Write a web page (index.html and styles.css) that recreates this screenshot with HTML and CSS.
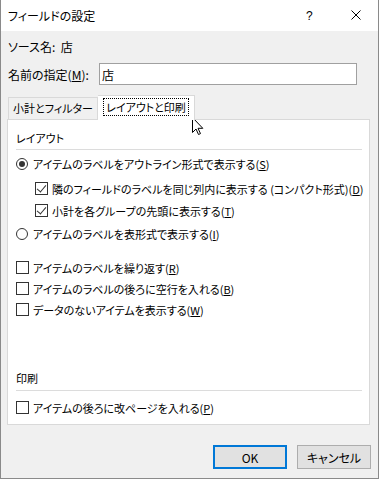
FILE: index.html
```html
<!DOCTYPE html>
<html lang="ja">
<head>
    <meta charset="UTF-8">
    <meta name="viewport" content="width=device-width, initial-scale=1.0">
    <title>フィールドの設定</title>
    <link rel="stylesheet" href="styles.css">
</head>
<body>
    <div class="window">
        <div class="titlebar">
            <span class="title">フィールドの設定</span>
            <span class="help">?</span>
            <span class="close">
                <svg width="10" height="10" viewBox="0 0 10 10"><path d="M0.5 0.5 L9.5 9.5 M9.5 0.5 L0.5 9.5" stroke="#000" stroke-width="1"/></svg>
            </span>
        </div>

        <div class="content">
            <div class="source">ソース名:&nbsp;&nbsp;店</div>

            <div class="name-row">
                <label for="name">名前の指定(<u>M</u>):</label>
                <input type="text" id="name" value="店">
            </div>

            <div class="tabs">
                <div class="tab">小計とフィルター</div>
                <div class="tab active"><span class="focus">レイアウトと印刷</span></div>
            </div>

            <div class="panel">
                <div class="group-title">レイアウト</div>
                <div class="sep"></div>

                <div class="opt r1"><span class="radio checked"></span>アイテムのラベルをアウトライン形式で表示する(<u>S</u>)</div>
                <div class="opt sub c1"><span class="check checked"></span>隣のフィールドのラベルを同じ列内に表示する (コンパクト形式)(<u>D</u>)</div>
                <div class="opt sub c2"><span class="check checked"></span>小計を各グループの先頭に表示する(<u>T</u>)</div>
                <div class="opt r2"><span class="radio"></span>アイテムのラベルを表形式で表示する(<u>I</u>)</div>

                <div class="opt c3"><span class="check"></span>アイテムのラベルを繰り返す(<u>R</u>)</div>
                <div class="opt"><span class="check"></span>アイテムのラベルの後ろに空行を入れる(<u>B</u>)</div>
                <div class="opt"><span class="check"></span>データのないアイテムを表示する(<u>W</u>)</div>

                <div class="group-title print">印刷</div>
                <div class="sep print-sep"></div>
                <div class="opt c6"><span class="check"></span>アイテムの後ろに改ページを入れる(<u>P</u>)</div>
            </div>

            <div class="buttons">
                <button class="btn default">OK</button>
                <button class="btn">キャンセル</button>
            </div>
        </div>

        <!-- mouse pointer over the tab -->
        <svg class="cursor" width="13" height="20" viewBox="0 0 13 20">
            <path d="M0.5 0.5 L0.5 15.5 L4 12 L6.5 17.5 L8.5 16.6 L6 11.3 L10.8 11.3 Z" fill="#fff" stroke="#000" stroke-width="1" stroke-linejoin="miter"/>
        </svg>
    </div>
</body>
</html>
```

FILE: styles.css
```css
body {
    margin: 0;
    font-family: "Noto Sans CJK JP", "Noto Sans", sans-serif;
    font-size: 12px;
    font-feature-settings: "palt";
    color: #000;
    background: #fff;
}
u {
    text-underline-offset: 1px;
}
.window {
    position: relative;
    width: 379px;
    height: 479px;
    box-sizing: border-box;
    border: 1px solid #8a8a8a;
    border-top: none;
    background: #f0f0f0;
    overflow: hidden;
}
.titlebar {
    height: 31px;
    background: #fff;
    display: flex;
    align-items: center;
    padding-left: 7px;
}
.title {
    flex: 1;
    font-size: 12px;
}
.help {
    width: 10px;
    margin-right: 35px;
    font-family: "Liberation Sans", sans-serif;
    font-size: 12px;
}
.close {
    display: flex;
    width: 10px;
    margin-right: 17px;
    margin-top: -1px;
}
.content {
    padding: 0 8px 0 6px;
}
.source {
    margin-top: 8px;
    padding-left: 1px;
    line-height: 16px;
}
.name-row {
    display: flex;
    align-items: center;
    margin-top: 8px;
    padding-left: 1px;
}
.name-row label {
    width: 91px;
}
.name-row input {
    width: 258px;
    height: 22px;
    box-sizing: border-box;
    border: 1px solid #a0a0a0;
    padding: 0 2px;
    font: inherit;
    font-feature-settings: "palt";
    outline: none;
}
.tabs {
    display: flex;
    align-items: flex-end;
    height: 24px;
    margin-top: 10px;
    padding-left: 1px;
    font-size: 11px;
    white-space: nowrap;
}
.tab {
    width: 90px;
    height: 22px;
    box-sizing: border-box;
    border: 1px solid #d9d9d9;
    border-bottom: none;
    display: flex;
    align-items: center;
    justify-content: center;
    padding-bottom: 1px;
}
.tab.active {
    position: relative;
    z-index: 1;
    width: 97px;
    height: 25px;
    margin-bottom: -1px;
    background: #fff;
    border-left: none;
    padding-bottom: 2px;
}
.focus {
    display: flex;
    align-items: center;
    justify-content: center;
    width: 86px;
    height: 18px;
    box-sizing: border-box;
    border: 1px dotted #000;
}
.panel {
    height: 306px;
    box-sizing: border-box;
    background: #fff;
    border: 1px solid #d9d9d9;
    padding: 0 7px 0 8px;
    font-size: 11px;
}
.group-title {
    margin-top: 10px;
    line-height: 16px;
}
.sep {
    height: 1px;
    background: #dcdcdc;
    margin-top: 3px;
}
.opt {
    height: 21px;
    display: flex;
    align-items: center;
    white-space: nowrap;
}
.opt.sub {
    padding-left: 19px;
}
.r1 { margin-top: 3px; }
.c1 { margin-top: 4px; }
.c2 { margin-top: 1px; }
.r2 { margin-top: 2px; }
.c3 { margin-top: 13px; }
.group-title.print { margin-top: 50px; }
.print-sep { margin-top: 4px; }
.c6 { margin-top: 6px; }

.check {
    width: 13px;
    height: 13px;
    box-sizing: border-box;
    border: 1px solid #333;
    margin-right: 4px;
    flex: none;
    position: relative;
}
.check.checked::after {
    content: "";
    position: absolute;
    left: 3px;
    top: 0px;
    width: 4px;
    height: 8px;
    border: solid #333;
    border-width: 0 1px 1px 0;
    transform: rotate(40deg);
}
.radio {
    width: 12px;
    height: 12px;
    box-sizing: border-box;
    border: 1px solid #333;
    border-radius: 50%;
    margin-right: 5px;
    flex: none;
    display: flex;
    align-items: center;
    justify-content: center;
}
.radio.checked::after {
    content: "";
    width: 6px;
    height: 6px;
    border-radius: 50%;
    background: #333;
}
.buttons {
    display: flex;
    justify-content: flex-end;
    gap: 10px;
    margin-top: 20px;
    margin-right: -1px;
}
.btn {
    width: 74px;
    height: 24px;
    box-sizing: border-box;
    background: #e1e1e1;
    border: 1px solid #adadad;
    font: inherit;
    font-feature-settings: "palt";
    color: #000;
    padding: 0;
}
.btn.default {
    border: 2px solid #0078d7;
}
.cursor {
    position: absolute;
    left: 191px;
    top: 117px;
}
```
